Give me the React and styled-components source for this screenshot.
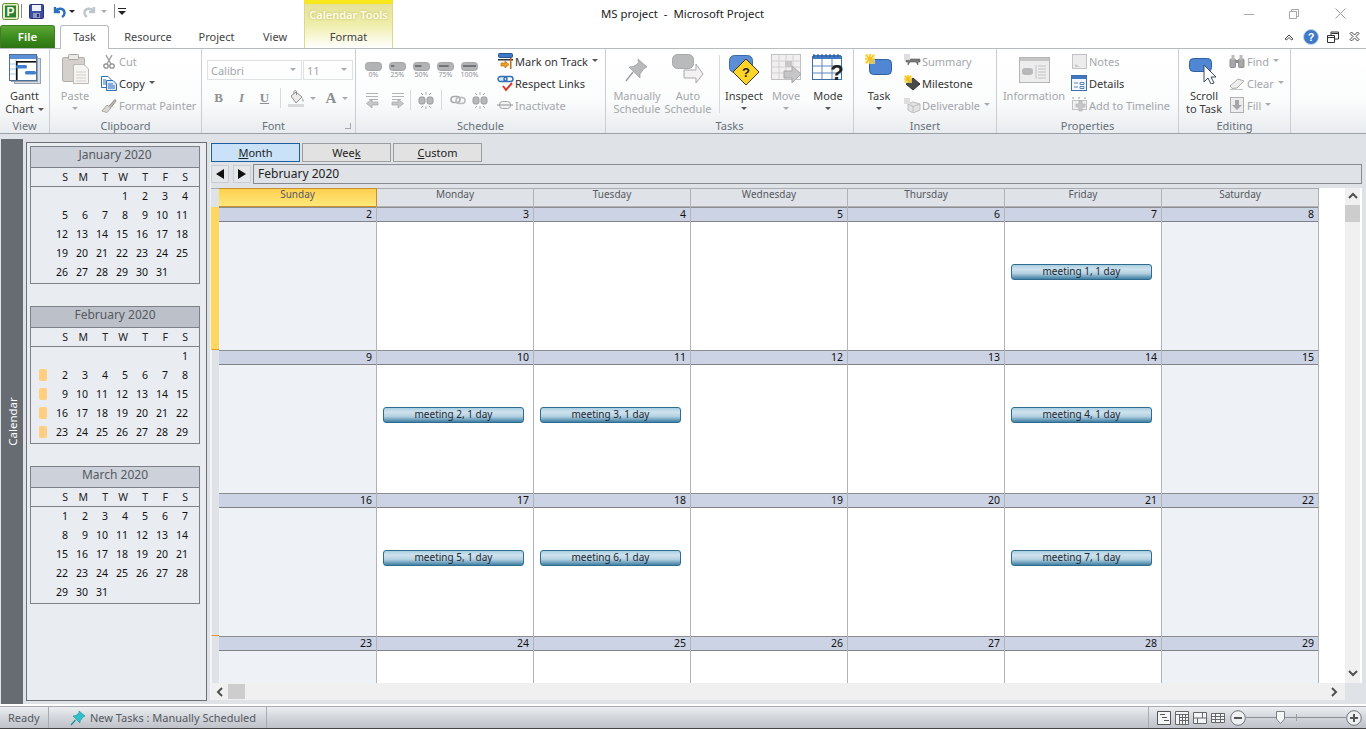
import React from 'react';
import styled, { createGlobalStyle } from 'styled-components';

const GlobalStyle = createGlobalStyle`
	html, body { margin: 0; padding: 0; background: #fff; }
	body { font-family: "Noto Sans", "Open Sans", sans-serif; font-size: 11px; color: #3c3c3c; }
`;

const Window = styled.div`
	width: 1366px;
	height: 729px;
	display: flex;
	flex-direction: column;
	overflow: hidden;
	background: #fff;
`;

/* ---------- header ---------- */
const Header = styled.div`
	display: flex;
	height: 48px;
	flex: none;
`;
const HeaderLeft = styled.div`
	width: 304px;
	display: flex;
	flex-direction: column;
`;
const QuickBar = styled.div`
	height: 25px;
	display: flex;
	align-items: center;
	padding-left: 2px;
	padding-bottom: 3px;
	box-sizing: border-box;
`;
const QuickSep = styled.span`
	width: 1px;
	height: 14px;
	background: #8a8a8a;
	margin: ${(p) => p.$margin};
`;
const Spacer = styled.span`
	width: ${(p) => p.$width}px;
	flex: none;
`;
const TabRow = styled.div`
	display: flex;
	height: 23px;
	align-items: flex-end;
`;
const FileTab = styled.div`
	width: 55px;
	height: 23px;
	box-sizing: border-box;
	border: 1px solid #3f7f22;
	border-bottom: none;
	border-radius: 3px 3px 0 0;
	background: linear-gradient(#5da735, #3b8a1d 55%, #2c7413);
	color: #fff;
	font-weight: 600;
	font-size: 11.5px;
	text-align: center;
	line-height: 22px;
	margin-right: 5px;
`;
const Tab = styled.div`
	width: ${(p) => p.$width}px;
	height: 23px;
	box-sizing: border-box;
	text-align: center;
	line-height: 23px;
	color: #444;
	font-size: 11px;
	${(p) => p.$active && `
		background: #fff;
		border: 1px solid #b6bbc1;
		border-bottom: none;
		border-radius: 3px 3px 0 0;
		position: relative;
		z-index: 2;
		height: 24px;
		margin-bottom: -1px;
		line-height: 22px;
	`}
`;
const ContextTab = styled.div`
	width: 89px;
	box-sizing: border-box;
	border-left: 1px solid #dcd98e;
	border-right: 1px solid #dcd98e;
	border-top: 4px solid #f8e71a;
	background: linear-gradient(#e6e29a, #efeda9 45%, #fff 100%);
	display: flex;
	flex-direction: column;
	align-items: center;
`;
const ContextTitle = styled.div`
	height: 21px;
	line-height: 22px;
	font-weight: 600;
	font-size: 11px;
	color: #fffef0;
	text-shadow: 0 0 3px #bdb74e;
`;
const ContextLabel = styled.div`
	line-height: 24px;
	color: #444;
`;
const HeaderRight = styled.div`
	flex: 1;
	display: flex;
	flex-direction: column;
`;
const TitleRow = styled.div`
	height: 25px;
	display: flex;
	align-items: center;
	padding-top: 2px;
	box-sizing: border-box;
`;
const AppTitle = styled.div`
	margin-left: 208px;
	width: 640px;
	font-size: 11.4px;
	color: #222;
	white-space: pre;
`;
const WinButton = styled.span`
	width: ${(p) => p.$width}px;
	display: flex;
	justify-content: center;
	margin-left: ${(p) => p.$left || 0}px;
`;
const HelpRow = styled.div`
	height: 23px;
	display: flex;
	align-items: center;
	justify-content: flex-end;
	padding-right: 6px;
`;

/* ---------- ribbon ---------- */
const Ribbon = styled.div`
	height: 86px;
	flex: none;
	display: flex;
	box-sizing: border-box;
	border-top: 1px solid #b6bbc1;
	border-bottom: 1px solid #9aa1a9;
	background: linear-gradient(#fff, #fbfcfc 60%, #e9ecef);
`;
const Group = styled.div`
	width: ${(p) => p.$width}px;
	flex: none;
	box-sizing: border-box;
	border-right: 1px solid #c9ced4;
	display: flex;
	flex-direction: column;
`;
const GroupBody = styled.div`
	flex: 1;
	display: flex;
	padding: 1px 0 0 ${(p) => p.$left || 0}px;
	box-sizing: border-box;
`;
const GroupLabel = styled.div`
	height: 16px;
	line-height: 18px;
	text-align: center;
	color: #66707a;
	font-size: 11px;
`;
const LargeButton = styled.div`
	width: ${(p) => p.$width}px;
	margin-right: ${(p) => p.$right || 0}px;
	flex: none;
	display: flex;
	flex-direction: column;
	align-items: center;
	color: ${(p) => (p.$off ? '#a4a7ab' : '#3c3c3c')};
	line-height: 13px;
	text-align: center;
	white-space: nowrap;
`;
const LargeIcon = styled.div`
	height: 39px;
	box-sizing: border-box;
	padding-top: ${(p) => p.$top ?? 4}px;
	display: flex;
	align-items: flex-start;
	justify-content: center;
`;
const Caret = styled.span`
	display: inline-block;
	width: 0;
	height: 0;
	border-left: 3px solid transparent;
	border-right: 3px solid transparent;
	border-top: 3px solid ${(p) => p.$color || (p.$off ? '#a8abaf' : '#555')};
	margin: ${(p) => p.$margin || '0 0 1px 4px'};
	vertical-align: middle;
`;
const BlockCaret = styled(Caret)`
	display: block;
	margin: 5px 0 0;
`;
const SmallColumn = styled.div`
	width: ${(p) => p.$width}px;
	flex: none;
	display: flex;
	flex-direction: column;
`;
const SmallRow = styled.div`
	height: 22px;
	display: flex;
	align-items: center;
	white-space: nowrap;
	color: ${(p) => (p.$off ? '#a4a7ab' : '#333')};
`;
const SmallIcon = styled.span`
	width: 18px;
	flex: none;
	display: flex;
	justify-content: center;
	margin-right: 1px;
`;
const VRule = styled.span`
	width: 1px;
	height: ${(p) => p.$height || 18}px;
	background: #d6d9dd;
	margin: ${(p) => p.$margin};
	flex: none;
`;
const ComboRow = styled.div`
	height: 20px;
	margin-top: 10px;
	display: flex;
	gap: 1px;
`;
const Combo = styled.div`
	width: ${(p) => p.$width}px;
	box-sizing: border-box;
	border: 1px solid #dfe2e5;
	padding: 0 5px 0 3px;
	display: flex;
	align-items: center;
	justify-content: space-between;
	color: #a4a7ab;
	font-size: 11px;
`;
const FontTools = styled.div`
	display: flex;
	align-items: center;
	height: 22px;
	margin-top: 7px;
`;
const FontGlyph = styled.span`
	width: ${(p) => p.$width}px;
	text-align: center;
	font-family: "Liberation Serif", serif;
	font-size: ${(p) => p.$size || 13}px;
	font-weight: ${(p) => p.$weight || 700};
	font-style: ${(p) => p.$italic ? 'italic' : 'normal'};
	text-decoration: ${(p) => p.$under ? 'underline' : 'none'};
	color: #8d9095;
`;
const PercentRow = styled.div`
	display: flex;
	gap: 7px;
	margin: 12px 0 0 9px;
`;
const Percent = styled.div`
	width: 17px;
	display: flex;
	flex-direction: column;
	align-items: center;
	font-size: 7px;
	line-height: 8px;
	color: #8f9296;
`;
const IndentRow = styled.div`
	display: flex;
	align-items: center;
	margin: 11px 0 0 9px;
`;
const DialogMark = styled.span`
	float: right;
	width: 5px;
	height: 5px;
	border-right: 1px solid #a4a7ab;
	border-bottom: 1px solid #a4a7ab;
	margin: 6px 4px 0 0;
`;

/* ---------- main area ---------- */
const Main = styled.div`
	flex: 1;
	min-height: 0;
	display: flex;
	background: #dfe2e7;
	padding: 4px 4px 0 1px;
	border-bottom: 2px solid #fff;
`;
const SideLabel = styled.div`
	width: 22px;
	flex: none;
	background: #676b72;
	color: #fff;
	display: flex;
	align-items: center;
	justify-content: center;
	margin: 1px 3px 0 0;
	font-size: 11.5px;
	span { transform: rotate(-90deg); }
`;
const SidePanel = styled.div`
	width: 181px;
	flex: none;
	box-sizing: border-box;
	height: 559px;
	margin-top: 4px;
	border: 1px solid #6d6f72;
	background: #e9ecf1;
	padding: 3px 3px 0 3px;
	display: flex;
	flex-direction: column;
	gap: 22px;
`;
const MonthBox = styled.div`
	width: 170px;
	height: 138px;
	box-sizing: border-box;
	border: 1px solid #7e8288;
`;
const MonthTitle = styled.div`
	height: 21px;
	box-sizing: border-box;
	border-bottom: 1px solid #7e8288;
	background: ${(p) => (p.$dark ? '#bcc1c9' : '#cdd2da')};
	text-align: center;
	line-height: 16px;
	font-size: 12px;
	color: #555960;
`;
const MiniGrid = styled.div`
	display: grid;
	grid-template-columns: repeat(7, 20px);
	padding-left: 18px;
	position: relative;
`;
const DowRow = styled(MiniGrid)`
	height: 19px;
	box-sizing: border-box;
	border-bottom: 1px solid #7e8288;
	line-height: 18px;
	font-size: 10.5px;
	color: #222;
`;
const Dow = styled.span`
	text-align: right;
	padding-right: 1px;
`;
const WeekRow = styled(MiniGrid)`
	height: 19px;
	line-height: 19px;
	font-size: 10.5px;
	color: #111;
`;
const DayNum = styled.span`
	text-align: right;
	padding-right: 1px;
`;
const WeekMark = styled.span`
	position: absolute;
	left: 8px;
	top: 3px;
	width: 8px;
	height: 12px;
	border-radius: 2px;
	background: #ffce80;
`;

const CalendarPane = styled.div`
	flex: 1;
	min-width: 0;
	margin: 5px 0 0 3px;
	display: flex;
	flex-direction: column;
	border-left: 1px solid #f3f4f6;
	height: 557px;
`;
const ViewTabs = styled.div`
	display: flex;
	gap: 2px;
	height: 21px;
`;
const ViewTab = styled.div`
	width: 89px;
	height: 19px;
	box-sizing: border-box;
	border: 1px solid ${(p) => (p.$active ? '#1d5f9c' : '#9b9da0')};
	background: ${(p) => (p.$active ? '#cae2f7' : '#e2e2e2')};
	text-align: center;
	line-height: 17px;
	font-size: 11px;
	color: #222;
	u { text-underline-offset: 1px; }
`;
const NavRow = styled.div`
	display: flex;
	height: 20px;
	gap: 4px;
	margin-bottom: 4px;
`;
const NavButton = styled.div`
	width: 18px;
	height: 18px;
	margin-top: 1px;
	box-sizing: border-box;
	border: 1px solid #c9ccd0;
	background: #e4e6ea;
	display: flex;
	align-items: center;
	justify-content: center;
`;
const NavTitle = styled.div`
	flex: 1;
	margin-left: -2px;
	box-sizing: border-box;
	border: 1px solid #86898e;
	font-size: 12px;
	line-height: 17px;
	padding-left: 4px;
	color: #222;
`;
const GridRow = styled.div`
	display: flex;
	height: 495px;
	background: #fff;
`;
const GridBody = styled.div`
	width: 1108px;
	flex: none;
	overflow: hidden;
`;
const GridGutter = styled.div`
	width: 26px;
	flex: none;
`;
const DayHeaderRow = styled.div`
	display: flex;
	height: 19px;
	background: #dfe2e7;
	box-sizing: border-box;
`;
const StripeHead = styled.div`
	width: 8px;
	flex: none;
	box-sizing: border-box;
	border-top: 1px solid #a8abaf;
`;
const Columns = styled.div`
	display: grid;
	grid-template-columns: 158px repeat(6, 157px);
	width: 1100px;
	flex: none;
`;
const DayHead = styled.div`
	box-sizing: border-box;
	border-top: 1px solid ${(p) => (p.$today ? '#c8902c' : '#a8abaf')};
	border-right: 1px solid ${(p) => (p.$today ? '#c8902c' : '#b0b2b5')};
	border-bottom: 1px solid ${(p) => (p.$today ? '#c8902c' : '#b0b2b5')};
	background: ${(p) => (p.$today ? 'linear-gradient(#ffd050, #ffe87a)' : '#dfe2e7')};
	text-align: center;
	font-size: 10px;
	line-height: 11px;
	color: #555960;
`;
const Week = styled.div`
	display: flex;
	height: 143px;
	flex: none;
`;
const Stripe = styled.div`
	width: 8px;
	flex: none;
	box-sizing: border-box;
	background: ${(p) => (p.$today ? '#ffd65e' : '#dfe2e7')};
	border-bottom: 1px solid ${(p) => (p.$mark ? '#d99a2e' : 'transparent')};
	border-left: 1px solid ${(p) => (p.$today ? '#ffd65e' : '#f3f4f6')};
`;
const Cell = styled.div`
	box-sizing: border-box;
	border-right: 1px solid #b3b4b7;
	background: ${(p) => (p.$weekend ? '#eef1f6' : '#fff')};
`;
const DateStrip = styled.div`
	height: 15px;
	box-sizing: border-box;
	background: #cbd3e4;
	border-top: 1px solid #8b8d91;
	border-bottom: 1px solid #808287;
	text-align: right;
	padding-right: 4px;
	font-size: 10.5px;
	line-height: 13px;
	color: #111;
`;
const EventBar = styled.div`
	margin: 42px 9px 0 6px;
	height: 16px;
	box-sizing: border-box;
	border: 1px solid #2f6c8f;
	border-radius: 3px;
	background: linear-gradient(#a9cfe0, #cfe3ee 30%, #b3d0e0 60%, #3f7fa3);
	text-align: center;
	font-size: 10px;
	line-height: 13px;
	color: #1c2733;
`;
const VScroll = styled.div`
	width: 15px;
	flex: none;
	background: #f0f0f0;
	display: flex;
	flex-direction: column;
	align-items: center;
	justify-content: space-between;
	padding: 4px 0;
	box-sizing: border-box;
	position: relative;
`;
const VThumb = styled.div`
	position: absolute;
	top: 17px;
	left: 0;
	width: 15px;
	height: 17px;
	background: #cdcdcd;
`;
const HScroll = styled.div`
	height: 17px;
	width: 1134px;
	flex: none;
	background: #f0f0f0;
	display: flex;
	align-items: center;
	padding: 0 5px;
	box-sizing: border-box;
`;
const HThumb = styled.div`
	width: 17px;
	height: 15px;
	background: #cdcdcd;
	margin: 0 auto 0 2px;
`;

/* ---------- status bar ---------- */
const StatusBar = styled.div`
	height: 23px;
	flex: none;
	display: flex;
	align-items: center;
	background: linear-gradient(#eceef1, #d5d8dd 45%, #bfc3c9);
	border-bottom: 1px solid #444;
	box-sizing: border-box;
	border-top: 1px solid #a8acb2;
	color: #555960;
`;
const StatusCell = styled.div`
	width: ${(p) => p.$width}px;
	flex: none;
	height: 100%;
	display: flex;
	align-items: center;
	box-sizing: border-box;
	padding-left: ${(p) => p.$pad}px;
	border-right: 1px solid #a8acb2;
	gap: 4px;
`;
const StatusRest = styled.div`
	flex: 1;
	display: flex;
	align-items: center;
	justify-content: flex-end;
	height: 100%;
	padding-right: 4px;
`;
const StatusDivider = styled.span`
	width: 1px;
	height: 100%;
	background: #a8acb2;
	margin-right: 8px;
`;
const Track = styled.div`
	width: 100px;
	height: 1px;
	background: #8c9096;
	position: relative;
`;
const TrackThumb = styled.span`
	position: absolute;
	left: 30px;
	top: -6px;
`;
const TrackTick = styled.span`
	position: absolute;
	left: 50px;
	top: -3px;
	width: 1px;
	height: 7px;
	background: #9aa0a6;
`;
const ViewIcons = styled.div`
	display: flex;
	gap: 4px;
	margin-right: 5px;
`;
const Svg = styled.svg`
	display: block;
	flex: none;
`;

/* ---------- drawings ---------- */
const ic = (w, h, children) => <Svg width={w} height={h} viewBox={`0 0 ${w} ${h}`}>{children}</Svg>;

const Logo = () => ic(17, 17, <>
	<rect x=".5" y=".5" width="16" height="16" rx="2" fill="#e6f0c8" stroke="#5f8f2a" />
	<rect x="3" y="2.5" width="11" height="12" fill="#2d7f35" />
	<text x="8.5" y="13" textAnchor="middle" fontSize="12" fontWeight="700" fontFamily="Liberation Sans" fill="#f4f8e0">P</text>
</>);
const Save = () => ic(15, 15, <>
	<rect x=".5" y=".5" width="14" height="14" rx="1" fill="#3b4fa8" stroke="#2a2f70" />
	<rect x="3" y="1" width="9" height="6" fill="#f0f2fa" />
	<rect x="4" y="9" width="7" height="5" fill="#8d97c4" />
	<rect x="8" y="10" width="2" height="3" fill="#2a2f70" />
</>);
const Undo = () => ic(14, 13, <path d="M3 2 L3 7 L8 7 M3.5 6.5 C6 2.5 12 3 12.5 7.5 C12.7 9.5 11.5 11 10 12" fill="none" stroke="#2a6fc0" strokeWidth="2.4" />);
const Redo = () => ic(14, 13, <path d="M11 2 L11 7 L6 7 M10.5 6.5 C8 2.5 2 3 1.5 7.5 C1.3 9.5 2.5 11 4 12" fill="none" stroke="#c0c6cb" strokeWidth="2.4" />);
const Customize = () => ic(8, 9, <>
	<rect x="0" y="1" width="8" height="1" fill="#222" />
	<path d="M0 4 H8 L4 8 Z" fill="#222" />
</>);
const Min = () => ic(10, 10, <rect x="0" y="5" width="10" height="1" fill="#a8a8a8" />);
const Restore = () => ic(10, 10, <path d="M.5 2.5H7.5V9.5H.5Z M2.5 2.5V.5H9.5V7.5H7.5" fill="none" stroke="#a8a8a8" />);
const Close = () => ic(11, 11, <path d="M.5 .5L10.5 10.5M10.5 .5L.5 10.5" stroke="#9a9a9a" />);
const Collapse = () => ic(10, 8, <path d="M1 6 L5 2 L9 6 L7.5 7 L5 4.5 L2.5 7 Z" fill="#fff" stroke="#333" strokeWidth=".9" />);
const Help = () => <Svg width="16" height="16" viewBox="0 0 16 16">
	<circle cx="8" cy="8" r="7.5" fill="#3f79c6" stroke="#bcd2ec" />
	<text x="8" y="12" textAnchor="middle" fontSize="11" fontWeight="700" fontFamily="Liberation Sans" fill="#fff">?</text>
</Svg>;
const DocRestore = () => ic(12, 12, <path d="M.5 4.5H7.5V11.5H.5Z M1 6.5H7 M4 4V1H11.5V8H8 M4.5 2.5H11" fill="#fff" stroke="#333" />);
const DocClose = () => ic(11, 11, <path d="M1 2.5L2.5 1L5.5 4L8.5 1L10 2.5L7 5.5L10 8.5L8.5 10L5.5 7L2.5 10L1 8.5L4 5.5Z" fill="#fff" stroke="#333" strokeWidth=".9" />);

const GanttIcon = () => ic(32, 30, <>
	<rect x="5.5" y="4.5" width="26" height="25" fill="#d7dde6" stroke="#98a2ae" />
	<rect x="2.5" y="2.5" width="26" height="25" fill="#eef1f5" stroke="#98a2ae" />
	<rect x=".5" y=".5" width="27" height="26" fill="#fff" stroke="#4f6f96" />
	<rect x="1" y="1" width="26" height="4" fill="#5b8fd6" />
	<path d="M7 5V26M1 10H7M1 15H7M1 20H7" stroke="#a9c4e6" />
	<rect x="8" y="7" width="19" height="1.6" fill="#111" />
	<rect x="7" y="7" width="1.6" height="19" fill="#111" />
	<rect x="7" y="11" width="11" height="3.5" rx="1.5" fill="#3e80cf" />
	<rect x="16" y="17" width="11" height="3.5" rx="1.5" fill="#3e80cf" />
</>);
const PasteIcon = () => ic(27, 30, <>
	<rect x=".5" y="3.5" width="22" height="24" rx="1.5" fill="#d5d0cb" stroke="#b3aeaa" />
	<rect x="6.5" y=".5" width="10" height="5" rx="1" fill="#ece9e6" stroke="#a8a4a0" />
	<path d="M11.5 10.5H22L26.5 15V29.5H11.5Z" fill="#f5f4f3" stroke="#bdb9b5" />
	<path d="M14 18H24M14 21H24M14 24H24M14 27H24" stroke="#d3d0cd" />
</>);
const Scissors = () => ic(12, 15, <>
	<path d="M3 1L8 10M9 1L4 10" stroke="#a2a2a2" strokeWidth="1.5" />
	<circle cx="3" cy="12" r="2.2" fill="none" stroke="#8e8e8e" strokeWidth="1.3" />
	<circle cx="9" cy="12" r="2.2" fill="none" stroke="#8e8e8e" strokeWidth="1.3" />
</>);
const CopyIcon = () => ic(16, 15, <>
	<path d="M.5 .5H7L10 3.5V11.5H.5Z" fill="#fff" stroke="#2f6fb8" />
	<path d="M5.5 4.5H12L15.5 8V14.5H5.5Z" fill="#dce9f7" stroke="#2f6fb8" />
	<path d="M2 4H5M2 6H5M2 8H5M7 8H12M7 10H14M7 12H14" stroke="#2f6fb8" />
</>);
const Brush = () => ic(16, 15, <>
	<path d="M1 13 L6 7 L10 10 L6 14.5 Z" fill="#dad8d2" stroke="#aaa79f" />
	<path d="M8 8 L14 1.5 L15 3 L10 9.5" fill="#b9b6ae" stroke="#96938c" />
</>);
const Fill = () => ic(18, 17, <>
	<path d="M3 6L8 2L14 7L8 13Z" fill="#ecebe9" stroke="#8e8e8e" />
	<path d="M6 4V1.5C6 .5 8.5 .5 8.5 1.5V5" fill="none" stroke="#8e8e8e" />
	<path d="M14 7L15.5 10C16.5 12 14 12 14.3 10Z" fill="#a5a5a5" />
	<rect x="0" y="14" width="16" height="3" fill="#d9dadc" />
</>);
const Pill = ({ level }) => ic(17, 9, <>
	<rect x=".5" y=".5" width="16" height="8" rx="3" fill="#b2b3b5" stroke="#a4a5a7" />
	{level > 0 && <rect x="2" y="3" width={level * 13} height="2" fill="#737477" />}
</>);
const Indent = ({ flip }) => ic(17, 17, <g transform={flip ? 'matrix(-1 0 0 1 17 0)' : undefined}>
	<path d="M1 1.5H13M1 4.5H13M4 7.5H13" stroke="#b2b3b5" />
	<path d="M10 8V11H16V14H10V17L4.5 12.5Z" fill="#c6c7c8" stroke="#a4a5a7" strokeWidth=".7" transform="translate(-3 -1)" />
</g>);
const Chain = () => ic(16, 10, <>
	<rect x="1" y="1.5" width="9" height="6" rx="3" fill="none" stroke="#a8a9ab" strokeWidth="1.6" />
	<rect x="6" y="2.5" width="9" height="6" rx="3" fill="none" stroke="#b9babc" strokeWidth="1.6" />
</>);
const Broken = () => ic(16, 17, <>
	<rect x="1" y="5" width="6" height="7" rx="2" fill="#b7b8ba" stroke="#9b9c9e" />
	<rect x="9" y="5" width="6" height="7" rx="2" fill="#b7b8ba" stroke="#9b9c9e" />
	<path d="M8 0V3M8 14V17M3 1L5 3M13 1L11 3M3 16L5 14M13 16L11 14" stroke="#b0b1b3" />
</>);
const TrackIcon = () => ic(15, 16, <>
	<rect x=".5" y=".5" width="14" height="4" rx="1" fill="#3d79c6" stroke="#28568f" />
	<rect x="0" y="6" width="15" height="1.5" fill="#333" />
	<rect x="12" y="5" width="1.5" height="11" fill="#c46a18" />
	<path d="M3 10H7V8L11 11.5L7 15V13H3Z" fill="#f0a020" stroke="#b56a10" strokeWidth=".7" />
</>);
const RespectIcon = () => ic(17, 17, <>
	<rect x="1" y="1.5" width="9" height="5" rx="2.5" fill="#d9e6f5" stroke="#2f6fb8" strokeWidth="1.4" />
	<rect x="7" y="1.5" width="9" height="5" rx="2.5" fill="none" stroke="#2f6fb8" strokeWidth="1.4" />
	<path d="M6 11L9 15L15 8" fill="none" stroke="#d83a2a" strokeWidth="2" />
</>);
const Inactive = () => ic(16, 10, <>
	<rect x="2.5" y="1.5" width="11" height="7" rx="3" fill="#f3f3f3" stroke="#a4a5a7" />
	<rect x="0" y="4.5" width="16" height="1" fill="#8f9092" />
</>);
const PinIcon = () => ic(24, 25, <>
	<path d="M13 2L22 10L19 11.5L15 17L15 21L4 10L8.5 9.5L13.5 6Z" fill="#b8b9bb" stroke="#98999b" strokeWidth=".7" />
	<path d="M8 15L1 24" stroke="#98999b" strokeWidth="1.3" />
</>);
const AutoIcon = () => ic(32, 31, <>
	<rect x=".5" y=".5" width="21" height="14" rx="5" fill="#b9babc" stroke="#a8a9ab" />
	<path d="M12 16H24V10L31 20L24 29V24H12Z" fill="#f4f1f2" stroke="#a9a9ab" />
</>);
const InspectIcon = () => ic(31, 32, <>
	<rect x=".5" y=".5" width="23" height="17" rx="5" fill="#5b8ed6" stroke="#3a68aa" />
	<path d="M17 4L30 17L17 30L4 17Z" fill="#ffd428" stroke="#3e3a20" />
	<text x="17" y="22" textAnchor="middle" fontSize="13" fontWeight="700" fontFamily="Liberation Sans" fill="#222">?</text>
</>);
const MoveIcon = () => ic(31, 31, <>
	<rect x=".5" y=".5" width="29" height="25" fill="#f1efef" stroke="#c2c1c1" />
	<path d="M8 .5V25M15 .5V25M22 .5V25M.5 7H29M.5 13H29M.5 19H29" stroke="#d2d1d1" />
	<rect x="14" y="7" width="7" height="6" fill="#c8c7c7" />
	<path d="M13 17H21V12L30 20L21 29V24H13Z" fill="#c6c6c8" stroke="#a8a8aa" />
</>);
const ModeIcon = () => ic(32, 33, <>
	<rect x=".5" y="2.5" width="29" height="23" fill="#fff" stroke="#3f6fa8" />
	<rect x="1" y="1" width="28" height="4" fill="#3f78c0" />
	<path d="M2 0V3M6 0V3M10 0V3M14 0V3M18 0V3M22 0V3M26 0V3" stroke="#2a4f80" />
	<path d="M10 5V25M20 5V25M1 12H29M1 19H29" stroke="#5a86bd" />
	<text x="25" y="26" textAnchor="middle" fontSize="22" fontWeight="700" fontFamily="Liberation Sans" fill="#222">?</text>
</>);
const Star = ({ x = 0, y = 0, size = 5 }) => <g transform={`translate(${x} ${y})`}>
	<rect x={-size} y={-size} width={size * 2} height={size * 2} fill="#ffe88a" opacity=".7" />
	<path d={`M${-size} 0H${size}M0 ${-size}V${size}M${-size + 1} ${-size + 1}L${size - 1} ${size - 1}M${size - 1} ${-size + 1}L${-size + 1} ${size - 1}`} stroke="#f2bf1a" strokeWidth="1.2" />
</g>;
const TaskIcon = () => ic(30, 24, <>
	<rect x="5.5" y="6.5" width="22" height="15" rx="4" fill="#4f87d4" stroke="#2f5f9f" />
	<Star x={6} y={6} />
</>);
const SummaryIcon = () => ic(17, 14, <>
	<path d="M2 5H16V8H14V11L12 8H6L4 11V8H2Z" fill="#77787a" stroke="#5e5f61" strokeWidth=".6" />
	<rect x="0" y="0" width="6" height="6" fill="#dedede" />
</>);
const MilestoneIcon = () => ic(17, 16, <>
	<path d="M9 3L16 9L9 15L2 9Z" fill="#4a4a4a" stroke="#333" />
	<Star x={4} y={4} size={4} />
</>);
const BoxIcon = () => ic(17, 15, <>
	<path d="M4 6L9 4L16 6V12L9 15L4 12Z" fill="#e3e3e3" stroke="#bdbdbd" />
	<path d="M4 6L9 8.5L16 6M9 8.5V15" fill="none" stroke="#bdbdbd" />
	<rect x="0" y="0" width="6" height="6" fill="#dedede" />
</>);
const InfoIcon = () => ic(31, 26, <>
	<rect x=".5" y=".5" width="30" height="25" fill="#ededee" stroke="#b6b5b6" />
	<rect x="1" y="1" width="29" height="3" fill="#c6c5c6" />
	<rect x="3" y="11" width="11" height="7" rx="3" fill="#b8b8ba" />
	<path d="M17 8V22M19 9H27M19 12H27M19 15H27M19 18H27M19 21H27" stroke="#c2c2c3" />
</>);
const NotesIcon = () => ic(15, 15, <>
	<rect x=".5" y=".5" width="14" height="14" fill="#ececed" stroke="#c2c2c3" />
	<path d="M3 10L8 13H3Z" fill="#c9c9ca" />
</>);
const DetailsIcon = () => ic(16, 16, <>
	<rect x=".5" y=".5" width="15" height="15" fill="#f4f8fc" stroke="#3f6fa8" />
	<rect x="1" y="1" width="14" height="3" fill="#3f78c0" />
	<path d="M3 8H7M9 7.5H13V9.5H9ZM3 12H7M9 11.5H13V13.5H9Z" stroke="#5a86bd" fill="none" />
</>);
const TimelineIcon = () => ic(17, 17, <>
	<path d="M1 1H3M7 1H9M13 1H15" stroke="#9a9a9a" />
	<rect x="1.5" y="3.5" width="14" height="9" fill="#f0f0f0" stroke="#c2c2c3" />
	<path d="M5 7H8V4H11V7H14V10H11V14H8V10H5Z" fill="#c9c9ca" stroke="#a8a8a9" strokeWidth=".6" />
</>);
const ScrollIcon = () => ic(30, 26, <>
	<rect x=".5" y=".5" width="22" height="13" rx="4" fill="#4f87d4" stroke="#2f5f9f" />
	<path d="M15 7V24L19 20L22 26L25 25L22 19H27Z" fill="#fff" stroke="#3a4a60" />
</>);
const Binoculars = () => ic(16, 14, <>
	<rect x="1" y="5" width="5.5" height="8.5" rx="1" fill="#a6a7a9" stroke="#8e8f91" />
	<rect x="9.5" y="5" width="5.5" height="8.5" rx="1" fill="#a6a7a9" stroke="#8e8f91" />
	<rect x="2.5" y="1" width="3" height="5" fill="#b9babc" />
	<rect x="10.5" y="1" width="3" height="5" fill="#b9babc" />
	<rect x="6" y="6" width="4" height="3" fill="#8e8f91" />
</>);
const Eraser = () => ic(16, 13, <>
	<path d="M1 9L9 2L15 4L8 11L3 11.5Z" fill="#ededed" stroke="#b0b0b1" />
	<path d="M1 12.5H14" stroke="#c5c5c6" />
</>);
const FillDown = () => ic(14, 16, <>
	<rect x=".5" y=".5" width="13" height="15" fill="#ededed" stroke="#b0b0b1" />
	<path d="M5 3H9V8H12L7 13L2 8H5Z" fill="#a5a6a8" />
</>);
const StatusPin = () => ic(16, 16, <>
	<path d="M9 1L15 6L13 7L10 11V13L3 6L6 5.5L9 3Z" fill="#2fc1c9" stroke="#1d8f96" strokeWidth=".6" />
	<path d="M5.5 10L1 15" stroke="#1d8f96" strokeWidth="1.2" />
</>);
const Chevron = ({ dir }) => {
	const d = { up: 'M1 6L5 2L9 6', down: 'M1 2L5 6L9 2', left: 'M6 1L2 5L6 9', right: 'M2 1L6 5L2 9' }[dir];
	return ic(10, 10, <path d={d} fill="none" stroke="#505050" strokeWidth="2" />);
};
const Arrow = ({ left }) => ic(10, 10, <path d={left ? 'M9 0V10L1 5Z' : 'M1 0V10L9 5Z'} fill="#111" />);
const ViewGantt = () => ic(14, 14, <path d="M.5 .5H13.5V13.5H.5Z M3 3.5H8M5 6.5H10M7 9.5H12" fill="#f4f5f6" stroke="#555" />);
const ViewGrid = () => ic(14, 14, <path d="M.5 .5H13.5V13.5H.5Z M.5 3.5H13.5 M4.5 3.5V13.5 M7.5 3.5V13.5M10.5 3.5V13.5M4.5 6.5H13.5M4.5 9.5H13.5" fill="#f4f5f6" stroke="#666" />);
const ViewCal = () => ic(14, 14, <path d="M.5 1.5H13.5V12.5H.5Z M.5 7H13.5 M4.5 7V12.5M9.5 1.5V7" fill="#f4f5f6" stroke="#666" />);
const ViewTable = () => ic(14, 14, <path d="M.5 2.5H13.5V11.5H.5Z M.5 5.5H13.5 M.5 8.5H13.5 M4.5 2.5V11.5M9.5 2.5V11.5" fill="#f4f5f6" stroke="#666" />);
const Zoom = ({ plus }) => ic(16, 16, <>
	<circle cx="8" cy="8" r="7.3" fill="#eef0f2" stroke="#6f747a" />
	<rect x="4" y="7" width="8" height="2" fill="#555" />
	{plus && <rect x="7" y="4" width="2" height="8" fill="#555" />}
</>);
const SliderThumb = () => ic(9, 13, <path d="M.5 .5H8.5V8L4.5 12.5L.5 8Z" fill="#f6f7f8" stroke="#7b8087" />);

/* ---------- data ---------- */
const DOW = ['S', 'M', 'T', 'W', 'T', 'F', 'S'];
const MINI_MONTHS = [
	{ title: 'January 2020', start: 3, days: 31 },
	{ title: 'February 2020', start: 6, days: 29, dark: true, marks: [1, 2, 3, 4] },
	{ title: 'March 2020', start: 0, days: 31 },
];
const WEEKS = [2, 9, 16, 23];
const DAY_NAMES = ['Sunday', 'Monday', 'Tuesday', 'Wednesday', 'Thursday', 'Friday', 'Saturday'];
const EVENTS = { 7: 1, 10: 2, 11: 3, 14: 4, 17: 5, 18: 6, 21: 7 };

const monthRows = (start, days) => {
	const cells = [...Array(start).fill(''), ...Array.from({ length: days }, (_, i) => i + 1)];
	const rows = [];
	for (let i = 0; i < cells.length; i += 7) rows.push(cells.slice(i, i + 7));
	return rows;
};

const MiniMonth = ({ title, start, days, dark, marks = [] }) => (
	<MonthBox>
		<MonthTitle $dark={dark}>{title}</MonthTitle>
		<DowRow>{DOW.map((d, i) => <Dow key={i}>{d}</Dow>)}</DowRow>
		{monthRows(start, days).map((row, r) => (
			<WeekRow key={r}>
				{marks.includes(r) && <WeekMark />}
				{row.map((n, i) => <DayNum key={i}>{n}</DayNum>)}
			</WeekRow>
		))}
	</MonthBox>
);

const App = () => (
	<Window>
		<GlobalStyle />
		<Header>
			<HeaderLeft>
				<QuickBar>
					<Logo />
					<QuickSep $margin="0 7px 0 2px" />
					<Save />
					<Spacer $width={8} />
					<Undo />
					<Caret $color="#222" $margin="0 8px 0 3px" />
					<Redo />
					<Caret $off $margin="0 7px 0 4px" />
					<QuickSep $margin="0 3px 0 0" />
					<Customize />
				</QuickBar>
				<TabRow>
					<FileTab>File</FileTab>
					<Tab $active $width={49}>Task</Tab>
					<Tab $width={78}>Resource</Tab>
					<Tab $width={59}>Project</Tab>
					<Tab $width={58}>View</Tab>
				</TabRow>
			</HeaderLeft>
			<ContextTab>
				<ContextTitle>Calendar Tools</ContextTitle>
				<ContextLabel>Format</ContextLabel>
			</ContextTab>
			<HeaderRight>
				<TitleRow>
					<AppTitle>{'MS project  -  Microsoft Project'}</AppTitle>
					<WinButton $width={16}><Min /></WinButton>
					<WinButton $width={16} $left={29}><Restore /></WinButton>
					<WinButton $width={16} $left={30}><Close /></WinButton>
				</TitleRow>
				<HelpRow>
					<Collapse />
					<Spacer $width={9} />
					<Help />
					<Spacer $width={8} />
					<DocRestore />
					<Spacer $width={10} />
					<DocClose />
				</HelpRow>
			</HeaderRight>
		</Header>

		<Ribbon>
			<Group $width={50}>
				<GroupBody>
					<LargeButton $width={49}>
						<LargeIcon><GanttIcon /></LargeIcon>
						Gantt<span>Chart<Caret /></span>
					</LargeButton>
				</GroupBody>
				<GroupLabel>View</GroupLabel>
			</Group>
			<Group $width={152}>
				<GroupBody>
					<LargeButton $off $width={50}>
						<LargeIcon><PasteIcon /></LargeIcon>
						Paste
						<BlockCaret $off />
					</LargeButton>
					<SmallColumn $width={100}>
						<SmallRow $off><SmallIcon><Scissors /></SmallIcon>Cut</SmallRow>
						<SmallRow><SmallIcon><CopyIcon /></SmallIcon>Copy<Caret /></SmallRow>
						<SmallRow $off><SmallIcon><Brush /></SmallIcon>Format Painter</SmallRow>
					</SmallColumn>
				</GroupBody>
				<GroupLabel>Clipboard</GroupLabel>
			</Group>
			<Group $width={154}>
				<GroupBody $left={5}>
					<SmallColumn $width={146}>
						<ComboRow>
							<Combo $width={95}>Calibri<Caret $off /></Combo>
							<Combo $width={50}>11<Caret $off /></Combo>
						</ComboRow>
						<FontTools>
							<FontGlyph $width={23}>B</FontGlyph>
							<FontGlyph $width={23} $italic>I</FontGlyph>
							<FontGlyph $width={23} $under>U</FontGlyph>
							<VRule $margin="0 7px 0 4px" $height={20} />
							<Fill />
							<Caret $off $margin="0 8px 0 4px" />
							<FontGlyph $width={14} $size={15}>A</FontGlyph>
							<Caret $off $margin="0 0 0 4px" />
						</FontTools>
					</SmallColumn>
				</GroupBody>
				<GroupLabel>Font<DialogMark /></GroupLabel>
			</Group>
			<Group $width={250}>
				<GroupBody>
					<SmallColumn $width={140}>
						<PercentRow>
							{[['0%', 0], ['25%', 0.25], ['50%', 0.5], ['75%', 0.75], ['100%', 1]].map(([t, l]) => (
								<Percent key={t}><Pill level={l} />{t}</Percent>
							))}
						</PercentRow>
						<IndentRow>
							<Indent />
							<Spacer $width={6} />
							<Indent flip />
							<VRule $margin="0 7px 0 5px" $height={20} />
							<Broken />
							<VRule $margin="0 8px 0 7px" $height={20} />
							<Chain />
							<Spacer $width={6} />
							<Broken />
						</IndentRow>
					</SmallColumn>
					<SmallColumn $width={108}>
						<SmallRow><SmallIcon><TrackIcon /></SmallIcon>Mark on Track<Caret /></SmallRow>
						<SmallRow><SmallIcon><RespectIcon /></SmallIcon>Respect Links</SmallRow>
						<SmallRow $off><SmallIcon><Inactive /></SmallIcon>Inactivate</SmallRow>
					</SmallColumn>
				</GroupBody>
				<GroupLabel>Schedule</GroupLabel>
			</Group>
			<Group $width={248}>
				<GroupBody $left={5}>
					<LargeButton $off $width={52}>
						<LargeIcon $top={7}><PinIcon /></LargeIcon>
						Manually<span>Schedule</span>
					</LargeButton>
					<LargeButton $off $width={50}>
						<LargeIcon><AutoIcon /></LargeIcon>
						Auto<span>Schedule</span>
					</LargeButton>
					<VRule $margin="5px 0 0 6px" $height={58} />
					<LargeButton $width={48}>
						<LargeIcon $top={5}><InspectIcon /></LargeIcon>
						Inspect
						<BlockCaret />
					</LargeButton>
					<LargeButton $off $width={36}>
						<LargeIcon><MoveIcon /></LargeIcon>
						Move
						<BlockCaret $off />
					</LargeButton>
					<LargeButton $width={48}>
						<LargeIcon><ModeIcon /></LargeIcon>
						Mode
						<BlockCaret />
					</LargeButton>
				</GroupBody>
				<GroupLabel>Tasks</GroupLabel>
			</Group>
			<Group $width={143}>
				<GroupBody $left={5}>
					<LargeButton $width={40} $right={4}>
						<LargeIcon $top={3}><TaskIcon /></LargeIcon>
						Task
						<BlockCaret />
					</LargeButton>
					<SmallColumn $width={90}>
						<SmallRow $off><SmallIcon><SummaryIcon /></SmallIcon>Summary</SmallRow>
						<SmallRow><SmallIcon><MilestoneIcon /></SmallIcon>Milestone</SmallRow>
						<SmallRow $off><SmallIcon><BoxIcon /></SmallIcon>Deliverable<Caret $off /></SmallRow>
					</SmallColumn>
				</GroupBody>
				<GroupLabel>Insert</GroupLabel>
			</Group>
			<Group $width={182}>
				<GroupBody $left={5}>
					<LargeButton $off $width={64} $right={4}>
						<LargeIcon $top={7}><InfoIcon /></LargeIcon>
						Information
					</LargeButton>
					<SmallColumn $width={104}>
						<SmallRow $off><SmallIcon><NotesIcon /></SmallIcon>Notes</SmallRow>
						<SmallRow><SmallIcon><DetailsIcon /></SmallIcon>Details</SmallRow>
						<SmallRow $off><SmallIcon><TimelineIcon /></SmallIcon>Add to Timeline</SmallRow>
					</SmallColumn>
				</GroupBody>
				<GroupLabel>Properties</GroupLabel>
			</Group>
			<Group $width={112}>
				<GroupBody $left={3}>
					<LargeButton $width={44} $right={2}>
						<LargeIcon $top={8}><ScrollIcon /></LargeIcon>
						Scroll<span>to Task</span>
					</LargeButton>
					<SmallColumn $width={60}>
						<SmallRow $off><SmallIcon><Binoculars /></SmallIcon>Find<Caret $off /></SmallRow>
						<SmallRow $off><SmallIcon><Eraser /></SmallIcon>Clear<Caret $off /></SmallRow>
						<SmallRow $off><SmallIcon><FillDown /></SmallIcon>Fill<Caret $off /></SmallRow>
					</SmallColumn>
				</GroupBody>
				<GroupLabel>Editing</GroupLabel>
			</Group>
		</Ribbon>

		<Main>
			<SideLabel><span>Calendar</span></SideLabel>
			<SidePanel>
				{MINI_MONTHS.map((m) => <MiniMonth key={m.title} {...m} />)}
			</SidePanel>
			<CalendarPane>
				<ViewTabs>
					<ViewTab $active><u>M</u>onth</ViewTab>
					<ViewTab>Wee<u>k</u></ViewTab>
					<ViewTab><u>C</u>ustom</ViewTab>
				</ViewTabs>
				<NavRow>
					<NavButton><Arrow left /></NavButton>
					<NavButton><Arrow /></NavButton>
					<NavTitle>February 2020</NavTitle>
				</NavRow>
				<GridRow>
					<GridBody>
						<DayHeaderRow>
							<StripeHead />
							<Columns>
								{DAY_NAMES.map((d, i) => <DayHead key={d} $today={i === 0}>{d}</DayHead>)}
							</Columns>
						</DayHeaderRow>
						{WEEKS.map((first, w) => (
							<Week key={first}>
								<Stripe $today={w === 0} $mark={w === 0 || w === 2} />
								<Columns>
									{DAY_NAMES.map((d, i) => {
										const n = first + i;
										return (
											<Cell key={d} $weekend={i === 0 || i === 6}>
												<DateStrip>{n}</DateStrip>
												{EVENTS[n] && <EventBar>meeting {EVENTS[n]}, 1 day</EventBar>}
											</Cell>
										);
									})}
								</Columns>
							</Week>
						))}
					</GridBody>
					<GridGutter />
					<VScroll>
						<Chevron dir="up" />
						<VThumb />
						<Chevron dir="down" />
					</VScroll>
				</GridRow>
				<HScroll>
					<Chevron dir="left" />
					<HThumb />
					<Chevron dir="right" />
				</HScroll>
			</CalendarPane>
		</Main>

		<StatusBar>
			<StatusCell $width={49} $pad={8}>Ready</StatusCell>
			<StatusCell $width={218} $pad={21}><StatusPin />New Tasks : Manually Scheduled</StatusCell>
			<StatusRest>
				<StatusDivider />
				<ViewIcons><ViewGantt /><ViewGrid /><ViewCal /><ViewTable /></ViewIcons>
				<Zoom />
				<Track><TrackTick /><TrackThumb><SliderThumb /></TrackThumb></Track>
				<Zoom plus />
			</StatusRest>
		</StatusBar>
	</Window>
);

export default App;
